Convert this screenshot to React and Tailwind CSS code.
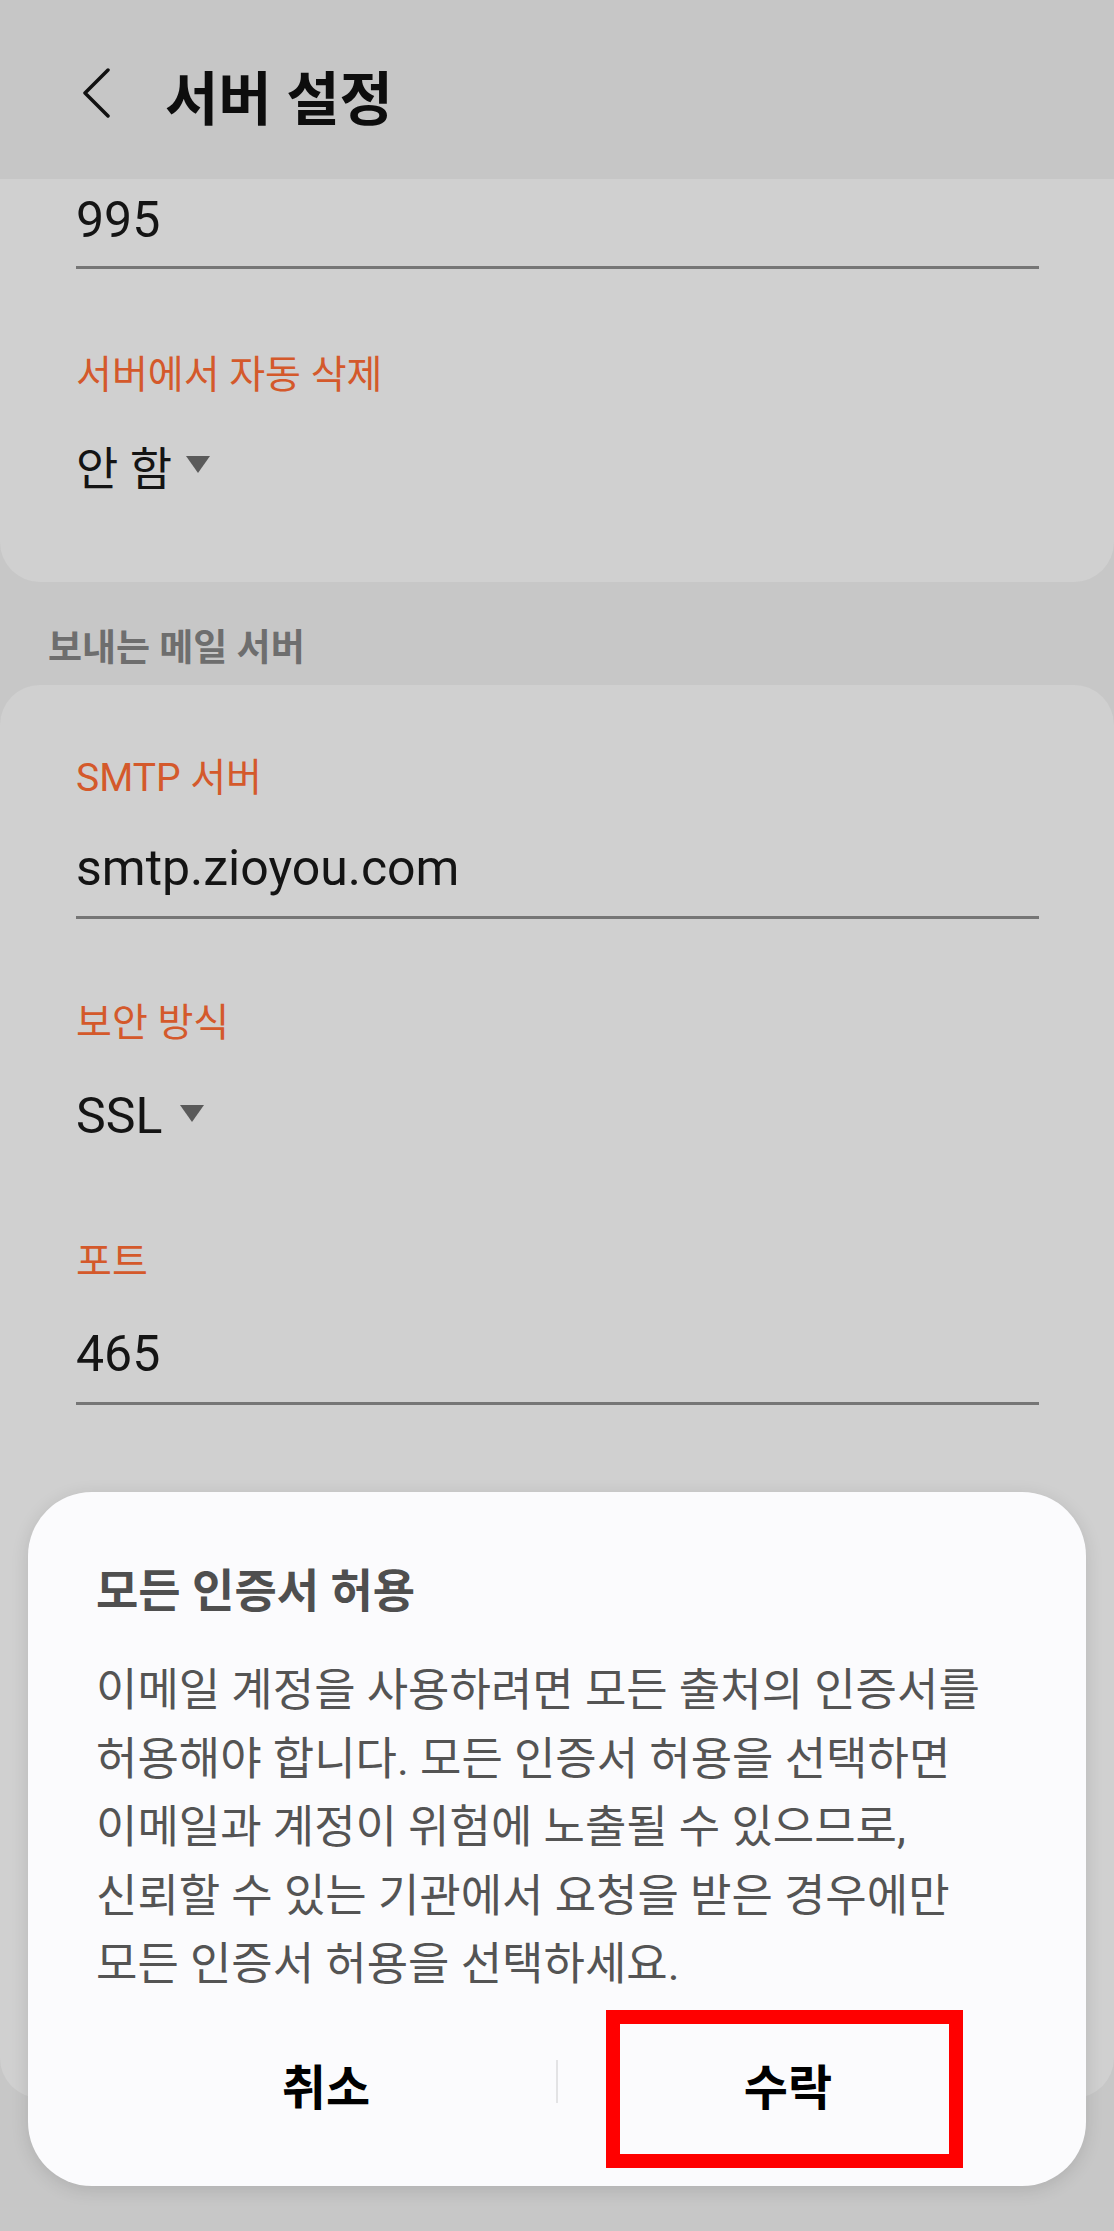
import React from 'react';

const FONT = "font-['Roboto','Noto_Sans_CJK_KR',sans-serif]";

function Caret() {
    return (
        <svg width="24" height="17" viewBox="0 0 24 17" className="shrink-0">
            <path d="M0 0 H24 L12 17 Z" fill="#5a5a5a" />
        </svg>
    );
}

function Label({ children, className = '' }) {
    return (
        <div className={`h-[44px] text-[39px] leading-[44px] text-[#d4592b] whitespace-nowrap ${className}`}>
            {children}
        </div>
    );
}

function Value({ children, underline, className = '' }) {
    return (
        <div className={`text-[50px] leading-[56px] text-[#141414] whitespace-nowrap ${underline ? 'border-b-[3px] border-[#767676] pb-[20px]' : ''} ${className}`}>
            {children}
        </div>
    );
}

function Dropdown({ text, className = '', size = 'text-[50px]', gap = 'ml-[18px]', caretOffset = 'mb-[22px]' }) {
    return (
        <div className={`flex items-end h-[56px] ${className}`}>
            <span className={`${size} leading-[56px] text-[#141414]`}>{text}</span>
            <span className={`${gap} ${caretOffset}`}><Caret /></span>
        </div>
    );
}

export default function App() {
    return (
        <div className={`relative w-[1114px] min-h-[2231px] bg-[#c7c7c7] ${FONT} overflow-hidden`}>
            {/* app bar */}
            <header className="h-[179px] bg-[#c6c6c6] flex items-start pl-[82px] pt-[68px]">
                <svg width="28" height="50" viewBox="0 0 28 50" className="shrink-0">
                    <path d="M26 2 L3 25 L26 48" fill="none" stroke="#111" strokeWidth="3.5" strokeLinecap="round" strokeLinejoin="round" />
                </svg>
                <h1 className="ml-[55px] text-[58px] leading-[64px] font-bold text-[#0d0d0d] whitespace-nowrap">서버 설정</h1>
            </header>

            {/* incoming server card (scrolled) */}
            <section className="bg-[#d0d0d0] rounded-b-[40px] px-[76px] pt-[13px] pb-[85px]">
                <div className="w-[963px]">
                    <Value underline className="!pb-[18px]">995</Value>
                </div>
                <Label className="mt-[84px]">서버에서 자동 삭제</Label>
                <Dropdown text="안 함" className="mt-[44px]" size="text-[46px]" gap="ml-[14px]" caretOffset="mb-[24px]" />
            </section>

            <div className="mt-[45px] ml-[48px] h-[44px] text-[37px] leading-[44px] font-semibold text-[#6e6e6e]">보내는 메일 서버</div>

            {/* outgoing server card */}
            <section className="mt-[14px] bg-[#d0d0d0] rounded-[40px] px-[76px] pt-[71px] pb-[693px]">
                <div className="w-[963px]">
                    <Label>SMTP 서버</Label>
                    <Value underline className="mt-[40px]">smtp.zioyou.com</Value>
                    <Label className="mt-[82px]">보안 방식</Label>
                    <Dropdown text="SSL" className="mt-[43px]" />
                    <Label className="mt-[96px]">포트</Label>
                    <Value underline className="mt-[42px]">465</Value>
                </div>
            </section>

            {/* dialog */}
            <div className="absolute left-[28px] right-[28px] top-[1492px] bg-[#fbfbfd] rounded-[64px] shadow-[0_4px_18px_rgba(0,0,0,0.12)] px-[68px] pt-[71px] pb-[18px]">
                <h2 className="text-[46px] leading-[56px] font-semibold text-[#4f4f4f] whitespace-nowrap">모든 인증서 허용</h2>
                <p className="mt-[38px] text-[45px] leading-[68.5px] text-[#545454] whitespace-nowrap">
                    이메일 계정을 사용하려면 모든 출처의 인증서를<br />
                    허용해야 합니다. 모든 인증서 허용을 선택하면<br />
                    이메일과 계정이 위험에 노출될 수 있으므로,<br />
                    신뢰할 수 있는 기관에서 요청을 받은 경우에만<br />
                    모든 인증서 허용을 선택하세요.
                </p>
                <div className="mt-[10px] h-[158px] flex items-center">
                    <button className="flex-1 h-full text-[48px] leading-[56px] font-bold text-black">취소</button>
                    <div className="w-[2px] h-[43px] bg-[#e3e3e5] mb-[15px]" />
                    <button className="flex-1 h-full text-[48px] leading-[56px] font-bold text-black">수락</button>
                </div>
                <div className="absolute left-[578px] top-[518px] w-[357px] h-[158px] border-[14px] border-[#ff0000] pointer-events-none" />
            </div>
        </div>
    );
}
